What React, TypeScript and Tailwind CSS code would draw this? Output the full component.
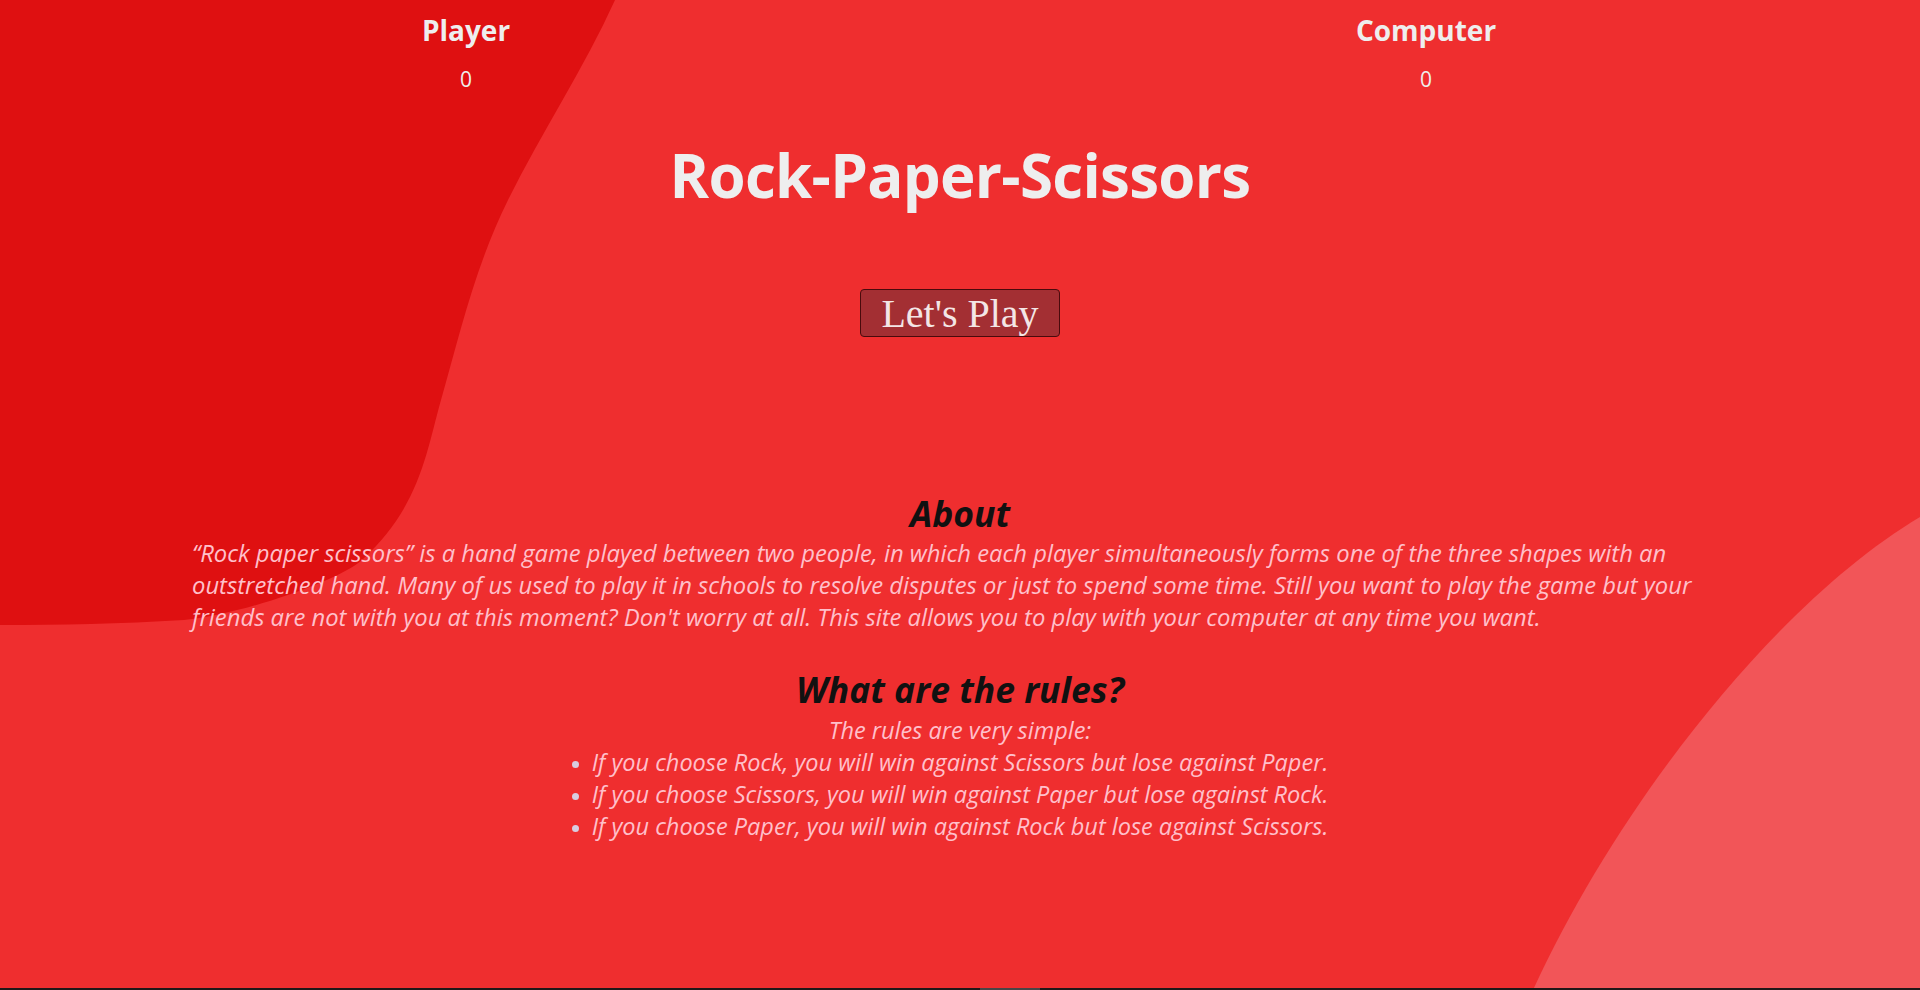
import React from 'react';

const rules = [
  'If you choose Rock, you will win against Scissors but lose against Paper.',
  'If you choose Scissors, you will win against Paper but lose against Rock.',
  'If you choose Paper, you will win against Rock but lose against Scissors.',
];

const App: React.FC = () => {
  return (
    <div className="relative h-[990px] w-full overflow-hidden bg-[#ef2e2f] font-['Open_Sans',sans-serif]">
      {/* Background blobs */}
      <svg
        className="absolute inset-0 h-full w-full"
        viewBox="0 0 1920 990"
        preserveAspectRatio="none"
      >
        <path
          d="M0 0 L615 0 C585 67 541 133 508 200 C475 267 460 333 441 400 C426 453 420 507 362 560 C340 580 244 614 184 620 C120 624 60 625 0 625 Z"
          fill="#df1011"
        />
        <path d="M1920 517 C1780 600 1620 800 1533 990 L1920 990 Z" fill="#f25558" />
      </svg>

      <div className="relative z-10">
        {/* Scores */}
        <div className="ml-[-14px] grid w-full grid-cols-2 pt-[12px] text-center text-[#eeeeee]">
          <div>
            <h3 className="text-[28px] font-bold leading-[36px]">Player</h3>
            <p className="mt-[17px] text-[21px] leading-[28px]">0</p>
          </div>
          <div>
            <h3 className="text-[28px] font-bold leading-[36px]">Computer</h3>
            <p className="mt-[17px] text-[21px] leading-[28px]">0</p>
          </div>
        </div>

        <h1 className="mt-[46px] text-center text-[60px] font-bold leading-[72px] tracking-[-0.7px] text-[#eeeeee]">
          Rock-Paper-Scissors
        </h1>

        <div className="mt-[78px] flex justify-center">
          <button className="flex h-[48px] items-center rounded-[4px] border border-[#4a0a0c] bg-[#a32f33] px-[20px] pt-[2px] font-['Liberation_Serif',serif] text-[40px] leading-none text-[#f3e6e6]">
            Let's Play
          </button>
        </div>

        {/* About */}
        <section className="mx-auto mt-[156px] w-[80%]">
          <h2 className="text-center text-[35.5px] font-bold italic leading-[40px] text-[#111111]">About</h2>
          <p className="mt-[4px] text-[23.8px] italic leading-[32px] text-[#ffc0cb]">
            “Rock paper scissors” is a hand game played between two people, in which each player simultaneously forms one of the three shapes with an
            <br />
            outstretched hand. Many of us used to play it in schools to resolve disputes or just to spend some time. Still you want to play the game but your
            <br />
            friends are not with you at this moment? Don't worry at all. This site allows you to play with your computer at any time you want.
          </p>

          <h2 className="mt-[35.5px] text-center text-[35.5px] font-bold italic leading-[40px] text-[#111111]">
            What are the rules?
          </h2>
          <p className="mt-[6.5px] text-center text-[23.5px] italic leading-[31px] text-[#ffc0cb]">
            The rules are very simple:
          </p>
          <ul className="text-center text-[23.5px] italic leading-[32px] text-[#ffc0cb]">
            {rules.map((r) => (
              <li key={r} className="pr-[20px]">
                <span className="mr-[13px] inline-block h-[7px] w-[7px] rounded-full bg-[#d8cde0] align-middle" />
                {r}
              </li>
            ))}
          </ul>
        </section>
      </div>

      {/* bottom edge */}
      <div className="absolute bottom-0 left-0 flex h-[2px] w-full justify-center bg-[#201818]">
        <div className="ml-[100px] h-full w-[60px] bg-[#4a4546]" />
      </div>
    </div>
  );
};

export default App;
